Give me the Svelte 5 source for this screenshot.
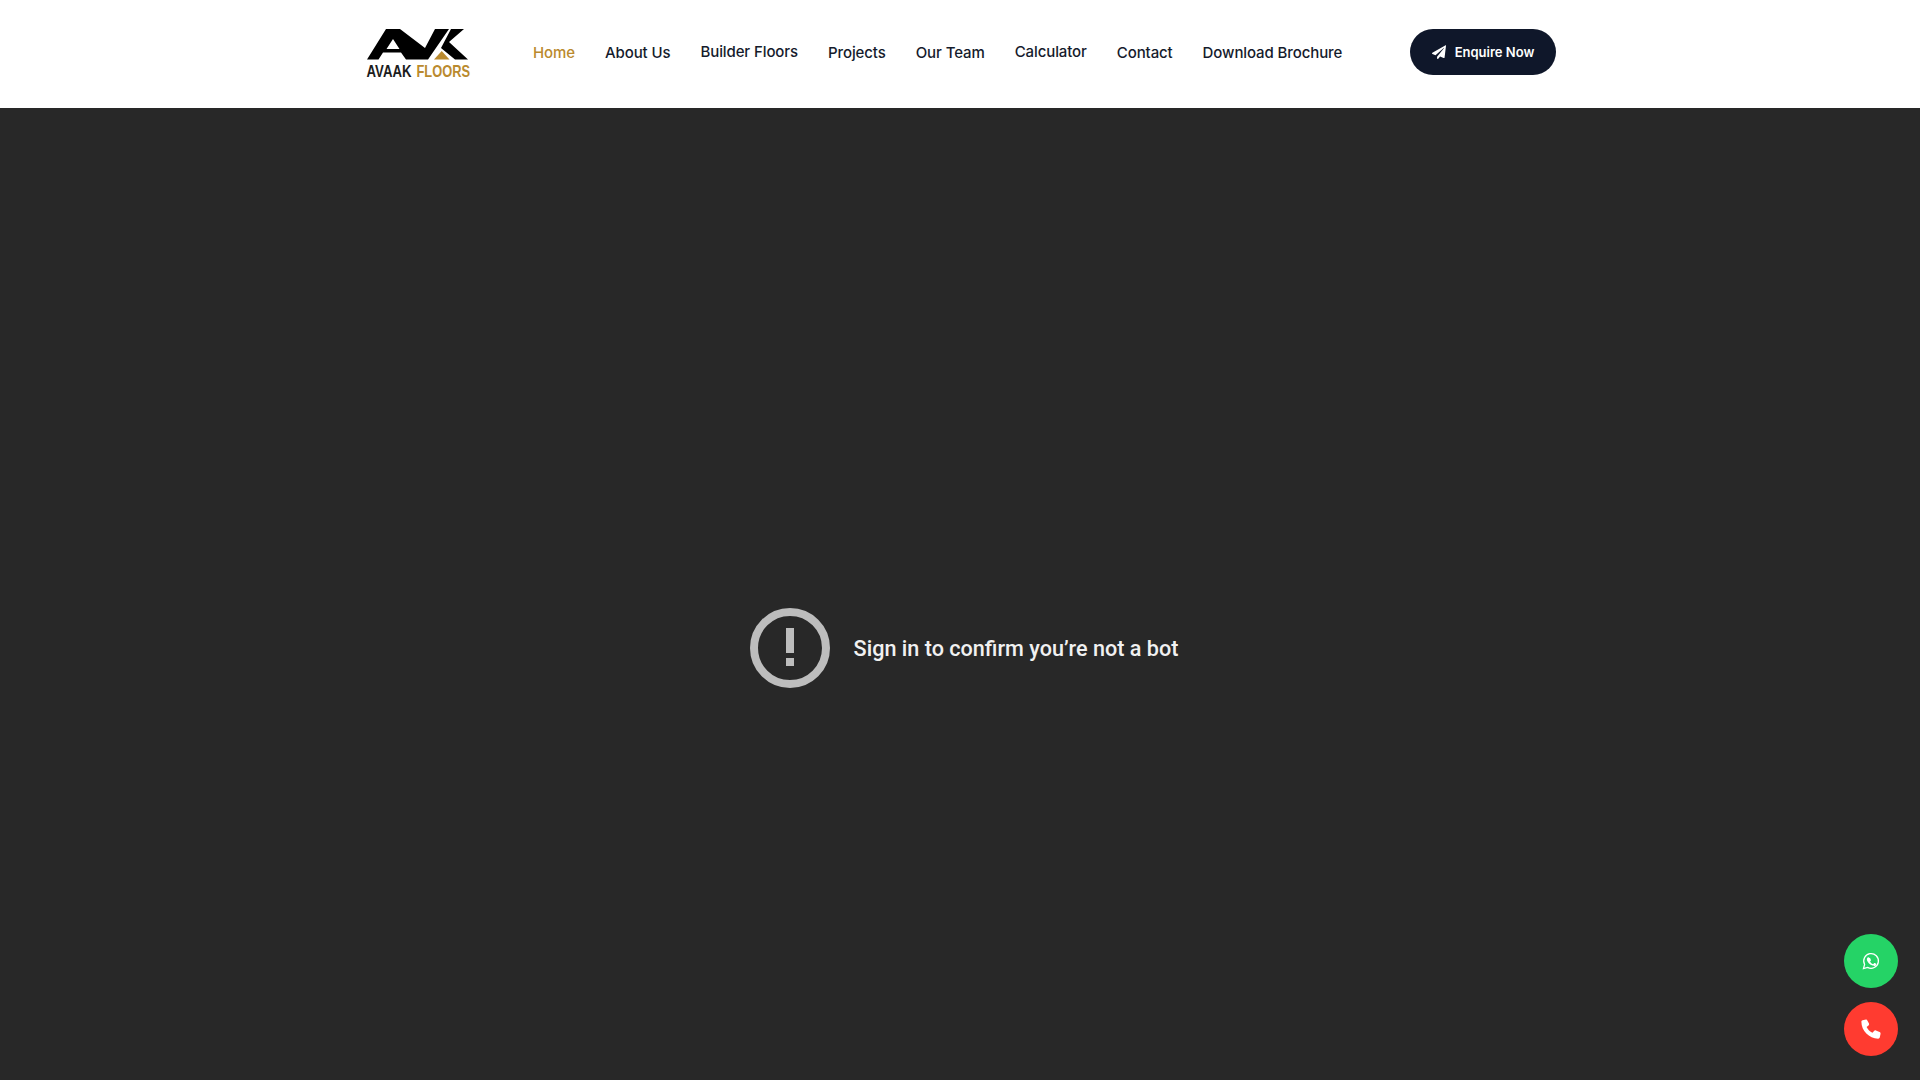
<script>
  const links = [
    { label: 'Home', active: true },
    { label: 'About Us' },
    { label: 'Builder Floors', raised: true },
    { label: 'Projects' },
    { label: 'Our Team' },
    { label: 'Calculator', raised: true },
    { label: 'Contact' },
    { label: 'Download Brochure' }
  ];
</script>

<div class="page">
  <header class="header">
    <a class="logo" href="#top" aria-label="Avaak Floors">
      <svg width="105" height="52" viewBox="366 27 105 52">
        <path fill="#000" fill-rule="evenodd" d="M367 59.500 386 29H400L425 48 435 29H449L428 59.500H406L401 52.500H383L378.500 59.500ZM393 39 386.500 49H399.500Z" />
        <path fill="#000" d="M451 29H464L449 42 468 59.500H455L441 48Z" />
        <path fill="#ba8a2e" d="M441.700 51 434 59.500H449.500Z" />
        <text x="366.500" y="77" class="lt" fill="#1c1c1c" textLength="45" lengthAdjust="spacingAndGlyphs">AVAAK</text>
        <text x="416.500" y="77" class="lt" fill="#ba8a2e" textLength="53.500" lengthAdjust="spacingAndGlyphs">FLOORS</text>
      </svg>
    </a>
    <nav class="nav">
      {#each links as link}
        <a href="#top" class:active={link.active} class:raised={link.raised}>{link.label}</a>
      {/each}
    </nav>
    <a class="cta" href="#top">
      <svg width="14" height="14" viewBox="0 0 512 512"><path fill="#fff" d="M498 7 14 286c-19 11-17 37 3 45l111 46 300-264c6-5 13 3 8 9L185 427v57c0 24 29 33 43 15l67-81 130 54c15 6 32-3 35-19L512 30c4-21-19-33-14-23Z" /></svg>
      <span>Enquire Now</span>
    </a>
  </header>

  <main class="stage">
    <div class="message">
      <svg width="80" height="80" viewBox="0 0 80 80">
        <circle cx="40" cy="40" r="36" fill="none" stroke="#bdbdbd" stroke-width="8" />
        <rect x="36" y="20" width="8" height="25" fill="#bdbdbd" />
        <rect x="36" y="50" width="8" height="8" fill="#bdbdbd" />
      </svg>
      <p>Sign in to confirm you’re not a bot</p>
    </div>
  </main>

  <a class="float wa" href="#top" aria-label="WhatsApp">
    <svg width="18" height="18" viewBox="0 0 24 24">
      <path fill="none" stroke="#fff" stroke-width="1.700" d="M2 22l1.500-5.400A9.800 9.800 0 1 1 7.400 20.500Z" />
      <path fill="#fff" d="M8.600 6.900c-.3 0-.7.100-1 .500-.4.400-1.100 1.100-1.100 2.600s1.100 3 1.300 3.200c.2.200 2.200 3.400 5.300 4.600 2.600 1 3.200.8 3.700.8.600-.1 1.800-.7 2-1.400.3-.7.300-1.300.200-1.400l-2.100-1.100c-.3-.1-.5-.2-.7.100l-1 1.200c-.2.200-.4.200-.7.100-1.500-.7-2.600-1.400-3.600-3.100-.2-.3 0-.5.100-.6l.9-1.100c.1-.2.100-.4 0-.6l-1-2.300c-.2-.5-.5-.5-.7-.5Z" />
    </svg>
  </a>
  <a class="float call" href="#top" aria-label="Call">
    <svg width="22" height="22" viewBox="0 0 24 24">
      <path fill="#fff" d="M6.600 1.600 2.800 2.500C2 2.700 1.500 3.400 1.500 4.200 1.500 14 9.900 22.500 19.800 22.500c.8 0 1.500-.5 1.700-1.300l.9-3.800c.2-.8-.2-1.600-1-2l-4.100-1.800c-.7-.3-1.500-.1-2 .5l-1.700 2.100c-2.800-1.400-5-3.600-6.400-6.400L9.300 8.100c.6-.5.8-1.300.5-2L8 2.600c-.3-.8-1.100-1.200-1.400-1Z" />
    </svg>
  </a>
</div>

<style>
  :global(body) {
    margin: 0;
    background: #282828;
  }
  .page {
    height: 1080px;
    display: flex;
    flex-direction: column;
    overflow: hidden;
    font-family: Inter, "Noto Sans", sans-serif;
  }
  .header {
    height: 108px;
    flex: none;
    box-sizing: border-box;
    background: #fff;
    display: flex;
    align-items: center;
    padding: 0 364px 4px 366px;
  }
  .logo {
    display: block;
    line-height: 0;
    margin-top: 2px;
  }
  .lt {
    font-family: "Liberation Sans", sans-serif;
    font-weight: 700;
    font-size: 16.500px;
  }
  .nav {
    display: flex;
    align-items: center;
    gap: 30px;
    margin-left: 62px;
    flex: 1;
  }
  .nav a {
    font-size: 15px;
    font-weight: 500;
    line-height: 24px;
    letter-spacing: -0.1px;
    color: #151b2c;
    text-decoration: none;
    margin-top: 2px;
    white-space: nowrap;
  }
  .nav a.raised {
    margin-top: 0;
  }
  .nav a.active {
    color: #ba8a2e;
  }
  .cta {
    width: 146px;
    height: 46px;
    border-radius: 23px;
    background: #0f172a;
    color: #fff;
    display: flex;
    align-items: center;
    justify-content: center;
    gap: 9px;
    font-size: 13px;
    font-weight: 600;
    text-decoration: none;
  }
  .cta span {
    padding-bottom: 1px;
  }
  .stage {
    flex: 1;
    box-sizing: border-box;
    padding-top: 108px;
    background: #282828;
    display: flex;
    align-items: center;
    justify-content: center;
  }
  .message {
    display: flex;
    align-items: center;
    gap: 24px;
    margin-left: 8px;
  }
  .message p {
    margin: 0;
    color: #f1f1f1;
    font-family: Roboto, sans-serif;
    font-weight: 500;
    font-size: 21.600px;
  }
  .float {
    position: fixed;
    right: 22px;
    width: 54px;
    height: 54px;
    border-radius: 50%;
    display: flex;
    align-items: center;
    justify-content: center;
  }
  .wa {
    bottom: 92px;
    background: #25d366;
  }
  .call {
    bottom: 24px;
    background: #ff3b30;
  }
</style>
